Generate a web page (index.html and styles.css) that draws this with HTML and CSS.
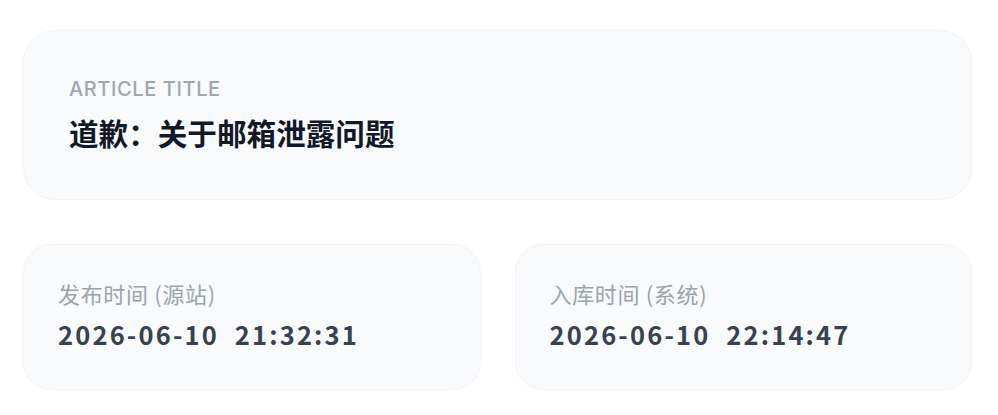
FILE: index.html
```html
<!DOCTYPE html>
<html lang="zh-CN">
<head>
<meta charset="utf-8">
<link rel="stylesheet" href="styles.css">
</head>
<body>
<main class="page">
  <section class="card card-title">
    <div class="eyebrow">ARTICLE TITLE</div>
    <h1 class="title">道歉：关于邮箱泄露问题</h1>
  </section>
  <div class="meta-grid">
    <section class="card card-meta">
      <div class="meta-label">发布时间 (源站)</div>
      <div class="meta-value">2026-06-10&nbsp;&nbsp;21:32:31</div>
    </section>
    <section class="card card-meta">
      <div class="meta-label">入库时间 (系统)</div>
      <div class="meta-value">2026-06-10&nbsp;&nbsp;22:14:47</div>
    </section>
  </div>
</main>
</body>
</html>
```
FILE: styles.css
```css
* { box-sizing: border-box; }
html, body { margin: 0; padding: 0; background: #ffffff; }
body { font-family: "Noto Sans CJK SC", "Noto Sans", sans-serif; }
.page {
  padding: 30px 26px 0 23px;
  display: flex;
  flex-direction: column;
  gap: 44px;
}
.card {
  background: #f9fafb;
  border: 1px solid #f1f3f5;
}
.card-title {
  border-radius: 32px;
  height: 170px;
  padding: 44px 45px 0 45px;
}
.eyebrow {
  font-family: Inter, "Noto Sans", sans-serif;
  font-size: 20px;
  line-height: 28px;
  letter-spacing: 0.03em;
  color: #a1a6ae;
  font-weight: 500;
}
.title {
  margin: 10px 0 0 0;
  font-size: 29.6px;
  line-height: 40px;
  font-weight: 700;
  color: #111827;
}
.meta-grid {
  display: grid;
  grid-template-columns: 1fr 1fr;
  gap: 34px;
}
.card-meta {
  border-radius: 28px;
  height: 146px;
  padding: 33px 34px 0 34px;
}
.meta-label {
  font-size: 22px;
  line-height: 30px;
  letter-spacing: 0.03em;
  color: #9ca3af;
}
.meta-value {
  margin-top: 8px;
  font-family: "Noto Sans CJK SC", "Noto Sans", sans-serif;
  font-variant-numeric: tabular-nums;
  font-size: 25.5px;
  line-height: 36px;
  letter-spacing: 0.085em;
  font-weight: 700;
  color: #374151;
}
```
